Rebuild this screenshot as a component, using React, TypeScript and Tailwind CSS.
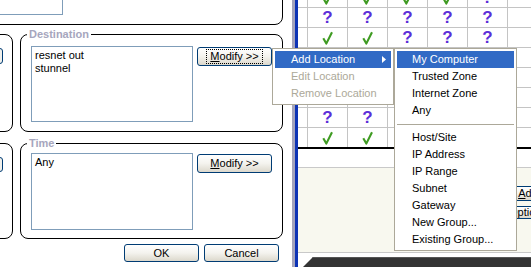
import React from 'react';

const FONT = "font-['Liberation_Sans',Arial,sans-serif]";

// grid of rule states: v = allowed (tick), ? = ask, space = hidden under the menus
const GRID_ROWS = ['vvvv?', '?????', 'vv???', '     ', '     ', '     ', '??   ', 'vv   '];

const Tick: React.FC = () => (
  <svg width="11" height="14" viewBox="0 0 11 14" fill="none">
    <path d="M1.3 7.2 L4.3 12.6 L10 1.2" stroke="#3f9b22" strokeWidth="2.1" strokeLinejoin="round" />
  </svg>
);

const XpButton: React.FC<{ className?: string; children: React.ReactNode }> = ({ className = '', children }) => (
  <button
    className={`flex items-center justify-center rounded-[3px] border border-[#003c74] bg-linear-to-b from-[#ffffff] via-[#f4f3ee] to-[#dcd8cc] text-[11px] leading-none text-black ${className}`}
  >
    {children}
  </button>
);

const GroupLabel: React.FC<{ children: React.ReactNode }> = ({ children }) => (
  <span className="-mt-[7px] ml-[6px] w-fit bg-white px-[2px] text-[11px] leading-[13px] font-bold text-[#a6a6bd]">
    {children}
  </span>
);

const MenuItem: React.FC<{ label: string; active?: boolean; disabled?: boolean; sub?: boolean; indent: string }> = ({
  label,
  active,
  disabled,
  sub,
  indent,
}) => (
  <div
    className={`flex h-[17px] items-center justify-between pr-[5px] text-[11px] leading-[17px] ${indent} ${
      active ? 'bg-[#316ac5] text-white' : disabled ? 'text-[#aca899]' : 'text-black'
    }`}
  >
    <span>{label}</span>
    {sub && (
      <svg width="4" height="7" viewBox="0 0 4 7">
        <path d="M0 0 L4 3.5 L0 7 Z" fill={active ? '#ffffff' : '#000000'} />
      </svg>
    )}
  </div>
);

const App: React.FC = () => {
  return (
    <div className={`relative flex h-[267px] w-[531px] overflow-hidden bg-white ${FONT}`}>
      {/* Left: rule editor dialog */}
      <div className="flex w-[292px] shrink-0 flex-col">
        <div className="-mt-[30px] -ml-[30px] flex h-[55px] w-[313px] shrink-0 items-end rounded-[8px] border border-black pb-[9px] pl-[4px]">
          <div className="h-[30px] w-[88px] border border-[#7f9db9] bg-white" />
        </div>

        {/* Destination */}
        <div className="mt-[9px] flex gap-[7px]">
          <div className="-ml-[40px] flex h-[98px] w-[53px] flex-col rounded-[8px] border border-black">
            <div className="mt-[13px] ml-[9px] h-[16px] w-[33px] rounded-[3px] border border-[#003c74] bg-[#f2f1ec]" />
          </div>
          <div className="flex h-[98px] w-[263px] flex-col rounded-[8px] border border-black">
            <GroupLabel>Destination</GroupLabel>
            <div className="mt-[5px] flex items-start gap-[4px] pl-[10px]">
              <div className="h-[76px] w-[162px] border border-[#7f9db9] pt-[2px] pl-[3px] text-[11px] leading-[13px]">
                <div>resnet out</div>
                <div>stunnel</div>
              </div>
              <XpButton className="mt-[1px] h-[19px] w-[75px]">
                <span className="border border-dotted border-black px-[3px] py-[1px]">
                  <span className="underline">M</span>odify &gt;&gt;
                </span>
              </XpButton>
            </div>
          </div>
        </div>

        {/* Time */}
        <div className="mt-[11px] flex gap-[7px]">
          <div className="-ml-[40px] flex h-[96px] w-[53px] flex-col rounded-[8px] border border-black">
            <div className="mt-[13px] ml-[9px] h-[15px] w-[33px] rounded-[3px] border border-[#003c74] bg-[#f2f1ec]" />
          </div>
          <div className="flex h-[96px] w-[263px] flex-col rounded-[8px] border border-black">
            <GroupLabel>Time</GroupLabel>
            <div className="mt-[3px] flex items-start gap-[4px] pl-[10px]">
              <div className="h-[77px] w-[162px] border border-[#7f9db9] pt-[2px] pl-[3px] text-[11px] leading-[13px]">
                <div>Any</div>
              </div>
              <XpButton className="mt-[1px] h-[19px] w-[75px]">
                <span>
                  <span className="underline">M</span>odify &gt;&gt;
                </span>
              </XpButton>
            </div>
          </div>
        </div>

        <div className="mt-[5px] flex justify-end gap-[5px] pr-[13px]">
          <XpButton className="h-[18px] w-[75px]">OK</XpButton>
          <XpButton className="h-[18px] w-[75px]">Cancel</XpButton>
        </div>
      </div>

      {/* Right: main window behind */}
      <div className="w-[3px] shrink-0 bg-[#a4a4bc]" />
      <div className="w-[3px] shrink-0 bg-[#0d33b5]" />
      <div className="flex min-w-0 flex-1 flex-col">
        <div className="-mt-[12px] flex flex-col">
          {GRID_ROWS.map((row, r) => (
            <div
              key={r}
              className={`flex ${r === GRID_ROWS.length - 1 ? 'h-[21px] border-b-2 border-black' : 'h-[20px] border-b border-[#c4c4c4]'}`}
            >
              <div className="w-[10px] shrink-0 border-r border-[#c4c4c4]" />
              {row.split('').map((c, i) => (
                <div key={i} className="flex w-[40px] shrink-0 items-center justify-center border-r border-[#c4c4c4]">
                  {c === 'v' && <Tick />}
                  {c === '?' && <span className="text-[17px] leading-none font-bold text-[#5b2ed8]">?</span>}
                </div>
              ))}
              <div className="flex-1" />
            </div>
          ))}
        </div>
        <div className="h-[19px] shrink-0 border-b border-[#c9c9c9]" />
        <div className="flex h-[85px] shrink-0 flex-col gap-[5px] border-b border-[#c9c9c9] bg-[#f8f8ef] pt-[18px]">
          <XpButton className="ml-[197px] h-[15px] w-[75px] shrink-0">
            <span>
              <span className="underline">A</span>dd...
            </span>
          </XpButton>
          <XpButton className="ml-[197px] h-[13px] w-[75px] shrink-0">Options...</XpButton>
        </div>
        <div className="mt-[4px] ml-[5px] h-[10px] shrink-0 border-t border-[#555] bg-[#343434] [clip-path:polygon(10px_0,100%_0,100%_100%,0_100%)]" />
      </div>

      {/* Context menu */}
      <div className="absolute top-[48px] left-[272px] w-[122px] border border-[#aca899] bg-white p-[2px]">
        <MenuItem label="Add Location" active sub indent="pl-[16px]" />
        <MenuItem label="Edit Location" disabled indent="pl-[16px]" />
        <MenuItem label="Remove Location" disabled indent="pl-[16px]" />
      </div>

      {/* Submenu */}
      <div className="absolute top-[48px] left-[394px] w-[123px] border border-[#aca899] bg-white p-[2px]">
        <MenuItem label="My Computer" active indent="pl-[15px]" />
        <MenuItem label="Trusted Zone" indent="pl-[15px]" />
        <MenuItem label="Internet Zone" indent="pl-[15px]" />
        <MenuItem label="Any" indent="pl-[15px]" />
        <div className="flex h-[10px] items-center">
          <div className="h-px w-full bg-[#aca899]" />
        </div>
        <MenuItem label="Host/Site" indent="pl-[15px]" />
        <MenuItem label="IP Address" indent="pl-[15px]" />
        <MenuItem label="IP Range" indent="pl-[15px]" />
        <MenuItem label="Subnet" indent="pl-[15px]" />
        <MenuItem label="Gateway" indent="pl-[15px]" />
        <MenuItem label="New Group..." indent="pl-[15px]" />
        <MenuItem label="Existing Group..." indent="pl-[15px]" />
      </div>
    </div>
  );
};

export default App;
